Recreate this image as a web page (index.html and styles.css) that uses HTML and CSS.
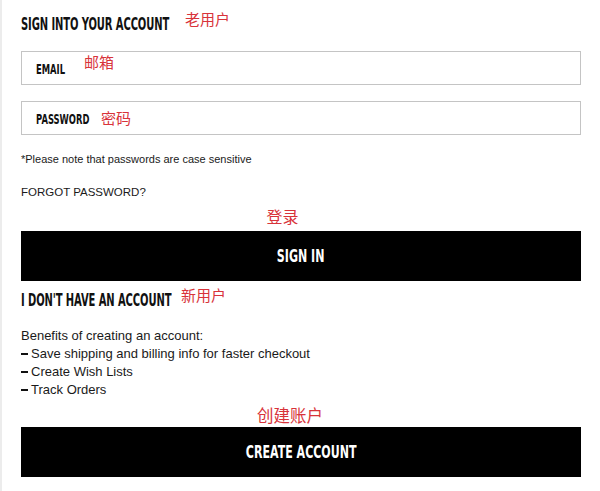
FILE: index.html
```html
<!DOCTYPE html>
<html lang="zh">
<head>
    <meta charset="UTF-8">
    <meta name="viewport" content="width=device-width, initial-scale=1.0">
    <title>Sign In</title>
    <link rel="stylesheet" href="styles.css">
</head>
<body>
    <div class="page">
        <!-- returning customer -->
        <div class="section-head">
            <h2 class="head-login"><span class="narrow">SIGN INTO YOUR ACCOUNT</span></h2>
            <span class="note-cn">老用户</span>
        </div>

        <label class="field">
            <span class="field-label label-email"><span class="narrow">EMAIL</span></span>
            <span class="note-cn">邮箱</span>
        </label>
        <label class="field">
            <span class="field-label label-pass"><span class="narrow">PASSWORD</span></span>
            <span class="note-cn note-low">密码</span>
        </label>

        <p class="hint">*Please note that passwords are case sensitive</p>
        <a class="forgot" href="#">FORGOT PASSWORD?</a>

        <div class="btn-note"><span class="note-cn">登录</span></div>
        <button class="black-btn"><span class="narrow">SIGN IN</span></button>

        <!-- new customer -->
        <div class="section-head second">
            <h2 class="head-new"><span class="narrow">I DON'T HAVE AN ACCOUNT</span></h2>
            <span class="note-cn">新用户</span>
        </div>

        <div class="benefits">
            <p>Benefits of creating an account:</p>
            <p><span class="dash"></span>Save shipping and billing info for faster checkout</p>
            <p><span class="dash"></span>Create Wish Lists</p>
            <p><span class="dash"></span>Track Orders</p>
        </div>

        <div class="btn-note create"><span class="note-cn">创建账户</span></div>
        <button class="black-btn"><span class="narrow">CREATE ACCOUNT</span></button>
    </div>
</body>
</html>
```

FILE: styles.css
```css
* {
    margin: 0;
    padding: 0;
    box-sizing: border-box;
}

body {
    font-family: 'Liberation Sans', 'Noto Sans CJK SC', sans-serif;
    background: #fff;
    color: #1a1a1a;
}

.page {
    border-left: 2px solid #ececec;
    padding: 0 19px;
    height: 491px;
}

/* condensed display face, squeezed from DejaVu Sans Bold */
.narrow {
    display: inline-block;
    white-space: nowrap;
    font-family: 'DejaVu Sans', sans-serif;
    font-weight: bold;
    transform-origin: left center;
}

.note-cn {
    font-family: 'Noto Sans CJK SC', sans-serif;
    color: #d8333a;
    font-size: 15px;
    line-height: 16px;
}

.section-head {
    display: flex;
    align-items: flex-start;
    padding-top: 12px;
    height: 51px;
}

.section-head .note-cn {
    margin-top: -1px;
}

.section-head h2 {
    font-size: 18px;
    line-height: 20px;
    margin-top: 2px;
    color: #111;
    flex-shrink: 0;
}

.section-head h2 .narrow {
    transform: scaleX(0.555);
    letter-spacing: -0.2px;
}

.head-login {
    width: 164px;
}

.head-new {
    width: 160px;
}

.section-head.second {
    padding-top: 7px;
    height: 46px;
}

.field {
    display: flex;
    align-items: flex-start;
    height: 34px;
    border: 1px solid #c4c4c4;
    padding: 2px 14px 0;
    margin-bottom: 16px;
}

.field-label {
    font-size: 14px;
    line-height: 14px;
    margin-top: 8px;
    color: #111;
    flex-shrink: 0;
}

.field-label .narrow {
    transform: scaleX(0.6);
}

.label-email {
    width: 48px;
}

.label-pass {
    width: 65px;
}

.note-low {
    margin-top: 6px;
}

.hint {
    font-size: 11px;
    line-height: 14px;
    margin-top: 17px;
}

.forgot {
    display: block;
    font-size: 11.5px;
    line-height: 14px;
    margin-top: 19px;
    color: #1a1a1a;
    text-decoration: none;
}

.btn-note {
    text-align: center;
    height: 32px;
    padding-top: 9px;
    padding-right: 37px;
}

.btn-note .note-cn {
    font-size: 16px;
}

.btn-note.create {
    height: 28px;
    padding-top: 8px;
    padding-right: 22px;
}

.btn-note.create .note-cn {
    font-size: 16.5px;
}

.black-btn {
    display: block;
    width: 100%;
    height: 50px;
    background: #000;
    color: #fff;
    border: none;
    font-size: 17px;
    cursor: pointer;
}

.black-btn .narrow {
    transform: scaleX(0.65);
    transform-origin: center;
}

.benefits p {
    font-size: 13px;
    line-height: 18px;
}

.dash {
    display: inline-block;
    width: 7px;
    height: 2px;
    background: #111;
    vertical-align: middle;
    margin: 0 3px 2px 0;
}
```
